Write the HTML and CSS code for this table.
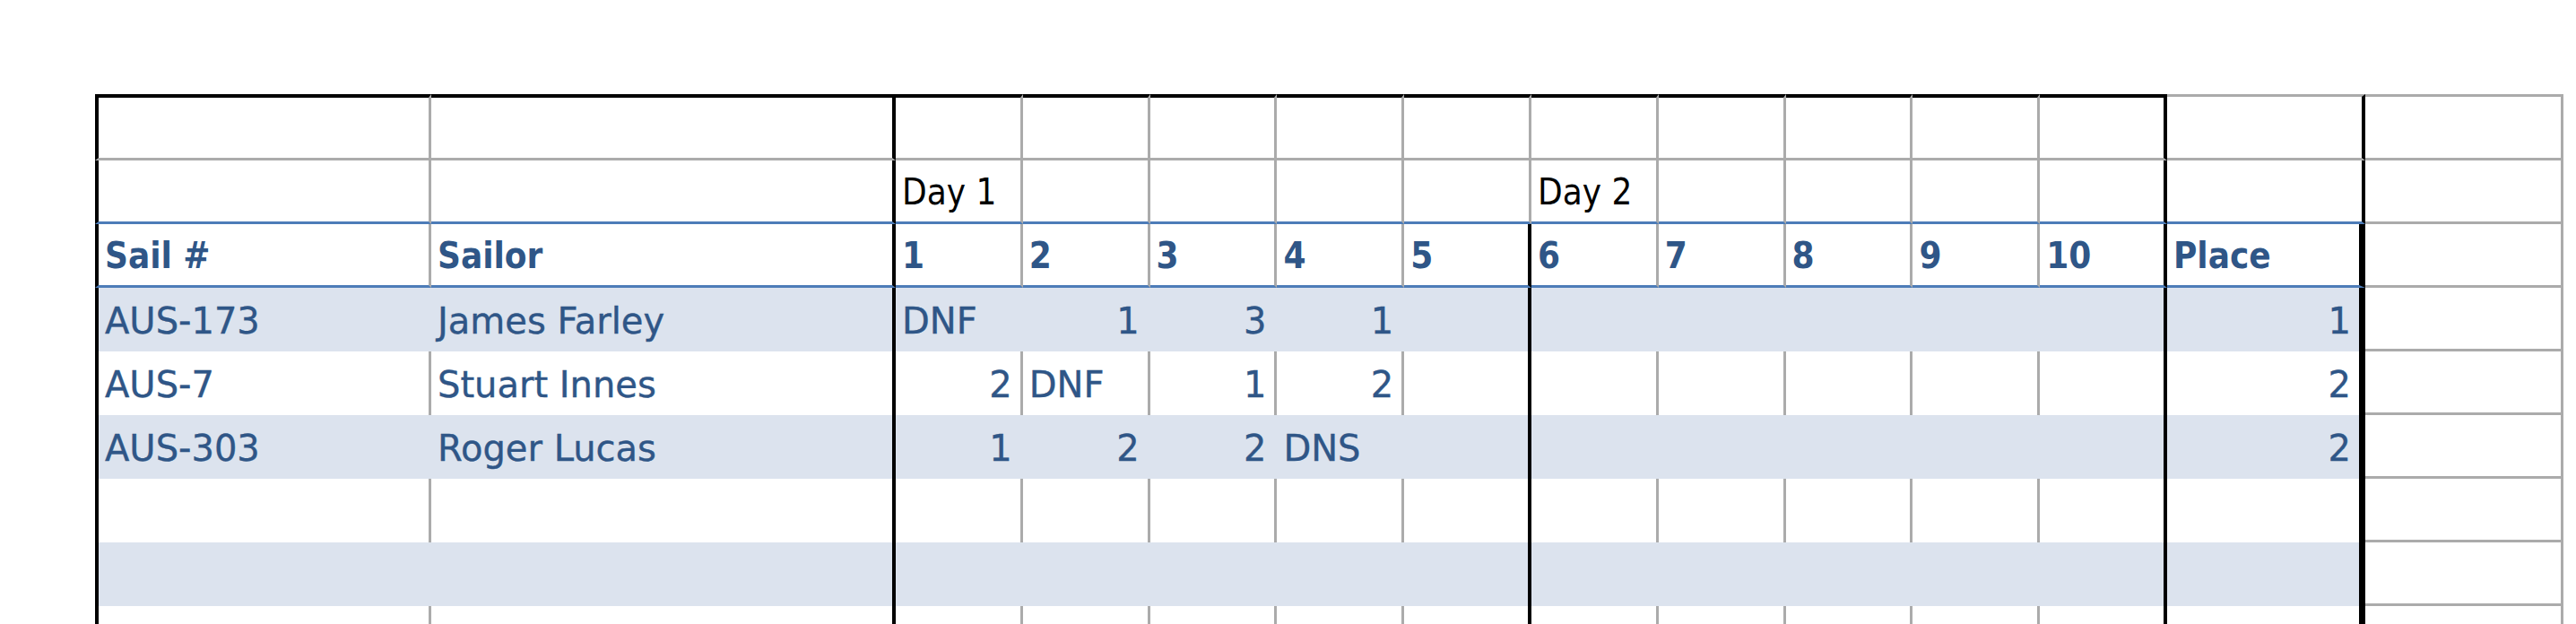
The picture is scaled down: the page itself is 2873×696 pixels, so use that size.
FILE: index.html
```html
<!DOCTYPE html>
<html lang="en">
<head>
<meta charset="utf-8">
<title>Race Results</title>
<link rel="stylesheet" href="styles.css">
</head>
<body>
<div class="sheet">
  <div class="row r-top">
    <div class="c k1"></div><div class="c k2"></div>
    <div class="c kr"></div><div class="c kr"></div><div class="c kr"></div><div class="c kr"></div><div class="c k5"></div>
    <div class="c kr"></div><div class="c kr"></div><div class="c kr"></div><div class="c kr"></div><div class="c k10"></div>
    <div class="c kp"></div><div class="c kx"></div>
  </div>
  <div class="row r-day">
    <div class="c k1"></div><div class="c k2"></div>
    <div class="c kr day">Day 1</div><div class="c kr"></div><div class="c kr"></div><div class="c kr"></div><div class="c k5"></div>
    <div class="c kr day">Day 2</div><div class="c kr"></div><div class="c kr"></div><div class="c kr"></div><div class="c k10"></div>
    <div class="c kp"></div><div class="c kx"></div>
  </div>
  <div class="row r-head">
    <div class="c k1">Sail #</div><div class="c k2">Sailor</div>
    <div class="c kr">1</div><div class="c kr">2</div><div class="c kr">3</div><div class="c kr">4</div><div class="c k5">5</div>
    <div class="c kr">6</div><div class="c kr">7</div><div class="c kr">8</div><div class="c kr">9</div><div class="c k10">10</div>
    <div class="c kp">Place</div><div class="c kx"></div>
  </div>
  <div class="row r-data r-shade">
    <div class="c k1">AUS-173</div><div class="c k2">James Farley</div>
    <div class="c kr">DNF</div><div class="c kr num">1</div><div class="c kr num">3</div><div class="c kr num">1</div><div class="c k5"></div>
    <div class="c kr"></div><div class="c kr"></div><div class="c kr"></div><div class="c kr"></div><div class="c k10"></div>
    <div class="c kp num">1</div><div class="c kx"></div>
  </div>
  <div class="row r-data">
    <div class="c k1">AUS-7</div><div class="c k2">Stuart Innes</div>
    <div class="c kr num">2</div><div class="c kr">DNF</div><div class="c kr num">1</div><div class="c kr num">2</div><div class="c k5"></div>
    <div class="c kr"></div><div class="c kr"></div><div class="c kr"></div><div class="c kr"></div><div class="c k10"></div>
    <div class="c kp num">2</div><div class="c kx"></div>
  </div>
  <div class="row r-data r-shade">
    <div class="c k1">AUS-303</div><div class="c k2">Roger Lucas</div>
    <div class="c kr num">1</div><div class="c kr num">2</div><div class="c kr num">2</div><div class="c kr">DNS</div><div class="c k5"></div>
    <div class="c kr"></div><div class="c kr"></div><div class="c kr"></div><div class="c kr"></div><div class="c k10"></div>
    <div class="c kp num">2</div><div class="c kx"></div>
  </div>
  <div class="row r-data">
    <div class="c k1"></div><div class="c k2"></div>
    <div class="c kr"></div><div class="c kr"></div><div class="c kr"></div><div class="c kr"></div><div class="c k5"></div>
    <div class="c kr"></div><div class="c kr"></div><div class="c kr"></div><div class="c kr"></div><div class="c k10"></div>
    <div class="c kp"></div><div class="c kx"></div>
  </div>
  <div class="row r-data r-shade">
    <div class="c k1"></div><div class="c k2"></div>
    <div class="c kr"></div><div class="c kr"></div><div class="c kr"></div><div class="c kr"></div><div class="c k5"></div>
    <div class="c kr"></div><div class="c kr"></div><div class="c kr"></div><div class="c kr"></div><div class="c k10"></div>
    <div class="c kp"></div><div class="c kx"></div>
  </div>
  <div class="row r-data">
    <div class="c k1"></div><div class="c k2"></div>
    <div class="c kr"></div><div class="c kr"></div><div class="c kr"></div><div class="c kr"></div><div class="c k5"></div>
    <div class="c kr"></div><div class="c kr"></div><div class="c kr"></div><div class="c kr"></div><div class="c k10"></div>
    <div class="c kp"></div><div class="c kx"></div>
  </div>
</div>
</body>
</html>
```

FILE: styles.css
```css
html, body {
  margin: 0;
  padding: 0;
  background: #ffffff;
  overflow: hidden;
}

.sheet {
  display: grid;
  grid-template-columns: 375px 518px repeat(10, 141.8px) 221px 221px;
  grid-template-rows: 74px repeat(8, 71px);
  margin-left: 106px;
  padding-top: 105px;
  font-family: "DejaVu Sans", Verdana, sans-serif;
  font-size: 40px;
  color: #2f5687;
}

.row {
  display: contents;
}

.c {
  box-sizing: border-box;
  display: flex;
  align-items: center;
  padding: 2px 9px 0 7px;
  white-space: nowrap;
  overflow: hidden;
  border-right: 3px solid #ababab;
  background: #ffffff;
  -webkit-text-stroke: 0.4px currentColor;
}

.num {
  justify-content: flex-end;
}

.k1 {
  border-left: 4px solid #000000;
}

.k2,
.k10 {
  border-right: 4px solid #000000;
}

.r-head .k5,
.r-data .k5 {
  border-right: 4px solid #000000;
}

.kp {
  border-right: 4px solid #000000;
}

.r-head .kp,
.r-data .kp {
  border-right-width: 7px;
}

.kx {
  border-right: 3px solid #ababab;
  border-bottom: 3px solid #ababab;
}

/* top blank row */
.r-top .c {
  border-top: 4px solid #000000;
  border-bottom: 3px solid #ababab;
}

.r-top .kp,
.r-top .kx {
  border-top: 3px solid #ababab;
}

/* day labels and header rows */
.r-day .c,
.r-head .c {
  border-bottom: 3px solid #4d7cb8;
}

.r-day .kx,
.r-head .kx {
  border-bottom-color: #ababab;
}

.day {
  color: #000000;
  font-family: "DejaVu Sans Condensed", "DejaVu Sans", sans-serif;
  font-stretch: condensed;
  -webkit-text-stroke: 0;
}

.r-head .c {
  font-family: "DejaVu Sans Condensed", "DejaVu Sans", sans-serif;
  font-stretch: condensed;
  font-weight: bold;
  -webkit-text-stroke: 0;
}

/* shaded data rows */
.r-shade .c {
  background: #dce3ee;
}

.r-shade .k1,
.r-shade .kr {
  border-right-color: transparent;
}

.r-shade .kx {
  background: #ffffff;
}
```
